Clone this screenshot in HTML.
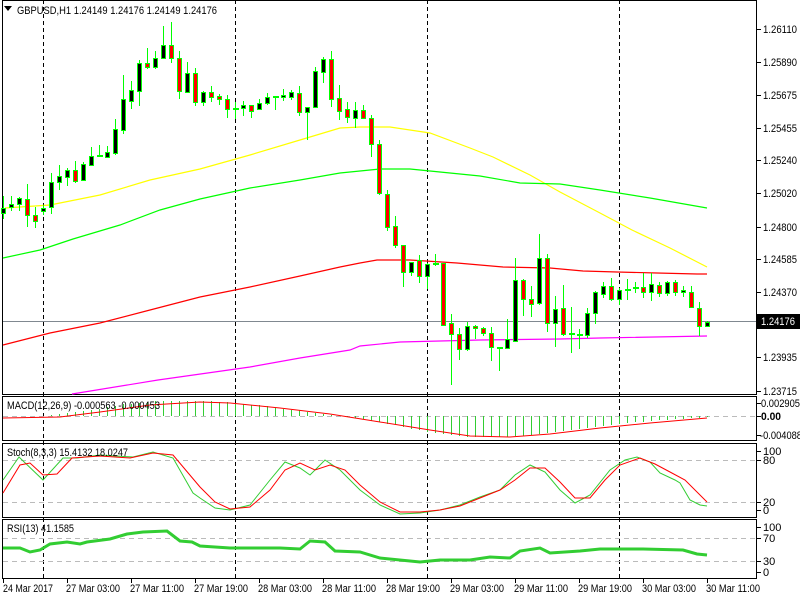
<!DOCTYPE html>
<html><head><meta charset="utf-8"><style>
html,body{margin:0;padding:0;background:#fff;}
svg{display:block;font-family:"Liberation Sans",Tahoma,sans-serif;font-size:11px;}
</style></head><body>
<svg width="800" height="600" viewBox="0 0 800 600" xmlns="http://www.w3.org/2000/svg">
<rect width="800" height="600" fill="#fff"/>
<g fill="none" stroke="#000" stroke-width="1">
<rect x="2.5" y="0.5" width="754" height="394"/>
<rect x="2.5" y="396.5" width="754" height="44"/>
<rect x="2.5" y="443.5" width="754" height="74"/>
<rect x="2.5" y="519.5" width="754" height="59"/>
</g>
<g stroke="#000" stroke-dasharray="4,3">
<path d="M43.5 0V578M235.5 0V578M427.5 0V578M619.5 0V578"/>
</g>
<g stroke="#bbb" stroke-dasharray="5,4">
<path d="M3 416.5H756M3 460.5H756M3 502.5H756M3 538.5H756M3 561.5H756"/>
</g>
<path d="M3 321.5H756" stroke="#808890"/>
<g fill="none" stroke-width="1.2">
<polyline stroke="#ffff00" points="5,208 50,205 100,195 150,180 200,169 250,155 300,140 340,128 360,127 390,127 430,133 470,148 493,157 530,175 560,192 600,213 632,230 670,248 707,267"/>
<polyline stroke="#00ff00" points="3,258 40,250 73,239 120,225 160,210 200,199 250,188 300,180 340,173 380,169 410,169 440,172 480,176 520,183 560,184 600,190 650,198 707,208"/>
<polyline stroke="#ff0000" points="3,345 50,333 100,323 150,310 200,297 250,287 300,276 340,267 360,263 377,260 410,260 457,263 503,267 550,268 583,271 617,272 657,273 697,274 707,274"/>
<polyline stroke="#ff00ff" points="72,394 158,380 250,367 300,358 350,350 360,346 400,342 480,340 560,339 600,338 707,336"/>
</g>
<path stroke="#00ff00" fill="none" d="M3.5 196V219M11.5 196V211M19.5 197V211M27.5 184V227M35.5 207V228M43.5 205V215M51.5 173V214M59.5 165V190M67.5 168V186M75.5 161V183M83.5 162V181M91.5 147V166M99.5 145V157M107.5 146V157M115.5 119V155M123.5 75V134M131.5 81V109M139.5 60V106M147.5 48V69M155.5 51V69M163.5 26V58M171.5 22V63M179.5 51V99M187.5 62V93M195.5 68V106M203.5 91V106M211.5 86V102M219.5 94V105M227.5 95V118M235.5 102V119M243.5 101V116M251.5 105V118M259.5 99V110M267.5 93V105M275.5 97V110M283.5 89V101M291.5 90V100M299.5 86V116M307.5 107V140M315.5 67V108M323.5 57V83M331.5 51V107M339.5 85V120M347.5 102V123M355.5 102V128M363.5 105V118M371.5 115V157M379.5 140V195M387.5 190V231M395.5 216V248M403.5 245V287M411.5 262V276M419.5 255V283M427.5 263V289M435.5 254V266M443.5 263V326M451.5 314V385M459.5 328V360M467.5 322V351M475.5 325V339M483.5 327V336M491.5 327V361M499.5 347V371M507.5 319V349M515.5 258V342M523.5 279V316M531.5 286V317M539.5 234V305M547.5 254V332M555.5 296V347M563.5 285V336M571.5 307V353M579.5 329V349M587.5 308V338M595.5 291V324M603.5 282V298M611.5 278V301M619.5 288V305M627.5 279V300M635.5 282V293M643.5 273V298M651.5 273V301M659.5 282V297M667.5 281V296M675.5 280V296M683.5 286V297M691.5 286V308M699.5 302V336M707.5 321V326"/>
<path stroke="#00ff00" stroke-width="2" d="M97 156h6M233 109h6M273 97h6M433 264h6M497 348h6M569 334h6M577 335h6M625 290h6M633 288h6"/>
<g fill="#000" stroke="#00ff00">
<rect x="1.5" y="208.5" width="4" height="5"/><rect x="9.5" y="204.5" width="4" height="3"/><rect x="17.5" y="198.5" width="4" height="6"/><rect x="41.5" y="208.5" width="4" height="3"/><rect x="49.5" y="182.5" width="4" height="25"/><rect x="57.5" y="176.5" width="4" height="6"/><rect x="65.5" y="170.5" width="4" height="7"/><rect x="81.5" y="164.5" width="4" height="16"/><rect x="89.5" y="156.5" width="4" height="9"/><rect x="105.5" y="152.5" width="4" height="5"/><rect x="113.5" y="129.5" width="4" height="24"/><rect x="121.5" y="99.5" width="4" height="31"/><rect x="129.5" y="90.5" width="4" height="11"/><rect x="137.5" y="63.5" width="4" height="28"/><rect x="153.5" y="58.5" width="4" height="9"/><rect x="161.5" y="45.5" width="4" height="13"/><rect x="185.5" y="73.5" width="4" height="19"/><rect x="201.5" y="92.5" width="4" height="10"/><rect x="241.5" y="105.5" width="4" height="3"/><rect x="257.5" y="103.5" width="4" height="6"/><rect x="265.5" y="97.5" width="4" height="6"/><rect x="281.5" y="95.5" width="4" height="2"/><rect x="289.5" y="92.5" width="4" height="5"/><rect x="305.5" y="107.5" width="4" height="5"/><rect x="313.5" y="71.5" width="4" height="36"/><rect x="321.5" y="59.5" width="4" height="13"/><rect x="353.5" y="110.5" width="4" height="8"/><rect x="409.5" y="262.5" width="4" height="10"/><rect x="425.5" y="264.5" width="4" height="12"/><rect x="465.5" y="326.5" width="4" height="23"/><rect x="505.5" y="339.5" width="4" height="9"/><rect x="513.5" y="280.5" width="4" height="61"/><rect x="537.5" y="258.5" width="4" height="45"/><rect x="553.5" y="309.5" width="4" height="14"/><rect x="585.5" y="313.5" width="4" height="22"/><rect x="593.5" y="292.5" width="4" height="21"/><rect x="601.5" y="286.5" width="4" height="8"/><rect x="617.5" y="290.5" width="4" height="9"/><rect x="649.5" y="284.5" width="4" height="8"/><rect x="665.5" y="282.5" width="4" height="11"/><rect x="681.5" y="290.5" width="4" height="2"/><rect x="705.5" y="322.5" width="4" height="4"/>
</g>
<g fill="#ff0000" stroke="#00ff00">
<rect x="25.5" y="199.5" width="4" height="16"/><rect x="33.5" y="215.5" width="4" height="6"/><rect x="73.5" y="170.5" width="4" height="11"/><rect x="145.5" y="63.5" width="4" height="4"/><rect x="169.5" y="45.5" width="4" height="13"/><rect x="177.5" y="58.5" width="4" height="33"/><rect x="193.5" y="73.5" width="4" height="29"/><rect x="209.5" y="92.5" width="4" height="5"/><rect x="217.5" y="96.5" width="4" height="3"/><rect x="225.5" y="99.5" width="4" height="10"/><rect x="249.5" y="105.5" width="4" height="6"/><rect x="297.5" y="93.5" width="4" height="19"/><rect x="329.5" y="59.5" width="4" height="40"/><rect x="337.5" y="98.5" width="4" height="13"/><rect x="345.5" y="109.5" width="4" height="8"/><rect x="361.5" y="110.5" width="4" height="8"/><rect x="369.5" y="118.5" width="4" height="26"/><rect x="377.5" y="144.5" width="4" height="49"/><rect x="385.5" y="194.5" width="4" height="33"/><rect x="393.5" y="226.5" width="4" height="19"/><rect x="401.5" y="245.5" width="4" height="27"/><rect x="417.5" y="260.5" width="4" height="16"/><rect x="441.5" y="263.5" width="4" height="62"/><rect x="449.5" y="323.5" width="4" height="11"/><rect x="457.5" y="334.5" width="4" height="15"/><rect x="473.5" y="326.5" width="4" height="2"/><rect x="481.5" y="328.5" width="4" height="5"/><rect x="489.5" y="333.5" width="4" height="14"/><rect x="521.5" y="280.5" width="4" height="19"/><rect x="529.5" y="299.5" width="4" height="5"/><rect x="545.5" y="258.5" width="4" height="65"/><rect x="561.5" y="308.5" width="4" height="26"/><rect x="609.5" y="286.5" width="4" height="13"/><rect x="641.5" y="287.5" width="4" height="5"/><rect x="657.5" y="285.5" width="4" height="8"/><rect x="673.5" y="282.5" width="4" height="10"/><rect x="689.5" y="292.5" width="4" height="15"/><rect x="697.5" y="308.5" width="4" height="18"/>
</g>
<path d="M4 6h8l-4 5z" fill="#000"/>
<text x="17" y="14" fill="#000" textLength="200" lengthAdjust="spacingAndGlyphs">GBPUSD,H1  1.24149 1.24176 1.24149 1.24176</text>
<g stroke="#000"><path d="M757 29.5h4M757 62.5h4M757 95.5h4M757 128.5h4M757 160.5h4M757 193.5h4M757 227.5h4M757 259.5h4M757 292.5h4M757 357.5h4M757 391.5h4M757 403.5h4M757 416.5h4M757 435.5h4M757 451.5h4M757 460.5h4M757 502.5h4M757 510.5h4M757 527.5h4M757 538.5h4M757 561.5h4M757 572.5h4"/></g>
<g fill="#000" font-size="11">
<text x="763" y="33" textLength="34" lengthAdjust="spacingAndGlyphs">1.26110</text><text x="763" y="66" textLength="34" lengthAdjust="spacingAndGlyphs">1.25890</text><text x="763" y="99" textLength="34" lengthAdjust="spacingAndGlyphs">1.25675</text><text x="763" y="132" textLength="34" lengthAdjust="spacingAndGlyphs">1.25455</text><text x="763" y="164" textLength="34" lengthAdjust="spacingAndGlyphs">1.25240</text><text x="763" y="197" textLength="34" lengthAdjust="spacingAndGlyphs">1.25020</text><text x="763" y="231" textLength="34" lengthAdjust="spacingAndGlyphs">1.24800</text><text x="763" y="263" textLength="34" lengthAdjust="spacingAndGlyphs">1.24585</text><text x="763" y="296" textLength="34" lengthAdjust="spacingAndGlyphs">1.24370</text><text x="763" y="361" textLength="34" lengthAdjust="spacingAndGlyphs">1.23935</text><text x="763" y="395" textLength="34" lengthAdjust="spacingAndGlyphs">1.23715</text>
<text x="761" y="407" textLength="39" lengthAdjust="spacingAndGlyphs">0.002905</text><text x="761" y="420" font-weight="bold" textLength="20" lengthAdjust="spacingAndGlyphs">0.00</text><text x="760" y="439" textLength="42" lengthAdjust="spacingAndGlyphs">-0.004088</text>
<text x="763" y="455">100</text><text x="763" y="464">80</text><text x="763" y="506">20</text><text x="763" y="514">0</text>
<text x="763" y="531">100</text><text x="763" y="542">70</text><text x="763" y="565">30</text><text x="763" y="576">0</text>
</g>
<rect x="757" y="314" width="43" height="15" fill="#000"/>
<text x="761" y="325" fill="#fff" textLength="34" lengthAdjust="spacingAndGlyphs">1.24176</text>
<path stroke="#32cd32" fill="none" d="M51.5 416V415M59.5 416V414M67.5 416V413M75.5 416V412M83.5 416V411M91.5 416V410M99.5 416V409M107.5 416V407M115.5 416V406M123.5 416V404M131.5 416V404M139.5 416V403M147.5 416V402M155.5 416V401M163.5 416V401M171.5 416V401M179.5 416V401M187.5 416V401M195.5 416V401M203.5 416V401M211.5 416V401M219.5 416V402M227.5 416V402M235.5 416V403M243.5 416V404M251.5 416V405M259.5 416V405M267.5 416V406M275.5 416V408M283.5 416V409M291.5 416V410M299.5 416V410M307.5 416V412M315.5 416V413M323.5 416V414M331.5 416V415M339.5 416V416M347.5 416V417M355.5 416V418M363.5 416V419M371.5 416V421M379.5 416V422M387.5 416V424M395.5 416V425M403.5 416V427M411.5 416V429M419.5 416V430M427.5 416V432M435.5 416V433M443.5 416V434M451.5 416V435M459.5 416V436M467.5 416V437M475.5 416V437M483.5 416V437M491.5 416V437M499.5 416V437M507.5 416V437M515.5 416V436M523.5 416V436M531.5 416V435M539.5 416V434M547.5 416V433M555.5 416V432M563.5 416V431M571.5 416V430M579.5 416V429M587.5 416V428M595.5 416V427M603.5 416V426M611.5 416V425M619.5 416V424M627.5 416V423M635.5 416V422M643.5 416V422M651.5 416V421M659.5 416V420M667.5 416V420M675.5 416V419M683.5 416V419M691.5 416V418M699.5 416V418M707.5 416V417"/>
<polyline fill="none" stroke="#ff0000" points="3,418 60,417 100,412 150,405 200,402 230,403 280,408 330,414 380,422 430,430 470,436 510,437 550,434 600,428 650,423 707,418"/>
<text x="7" y="409" fill="#000" textLength="153" lengthAdjust="spacingAndGlyphs">MACD(12,26,9) -0.000563 -0.000453</text>
<polyline fill="none" stroke="#32cd32" points="3,480 19,457 43,480 63,458 77,458 100,455 133,457 153,452 173,458 193,493 200,498 215,508 230,510 250,505 270,480 285,462 300,468 310,475 325,460 340,470 360,490 380,505 400,514 420,513 440,510 460,505 480,497 500,490 515,475 530,465 545,472 560,490 575,503 590,495 610,470 625,460 637,457 650,462 660,473 675,480 680,483 690,500 700,505 707,506"/>
<polyline fill="none" stroke="#ff0000" points="3,493 20,465 30,463 43,475 57,474 72,458 100,456 130,458 153,453 173,455 200,487 215,502 230,509 250,507 270,490 285,470 300,463 315,470 330,465 345,470 360,485 380,502 400,512 420,512 440,510 460,506 480,498 500,490 515,480 530,468 545,468 560,482 575,498 590,498 605,480 620,465 640,458 655,464 670,472 685,480 707,502"/>
<text x="7" y="456" fill="#000" textLength="121" lengthAdjust="spacingAndGlyphs">Stoch(8,3,3) 15.4132 18.0247</text>
<polyline fill="none" stroke="#32cd32" stroke-width="3" points="3,548 20,548 30,552 40,550 50,544 67,542 80,544 87,542 110,539 127,534 143,532 167,531 180,541 192,542 200,546 230,548 280,548 300,549 310,541 325,542 335,551 360,552 380,558 420,562 440,560 470,560 490,557 510,558 520,551 540,548 550,553 580,551 600,549 620,549 643,549 683,550 697,554 707,555"/>
<text x="7" y="532" fill="#000" textLength="67" lengthAdjust="spacingAndGlyphs">RSI(13) 41.1585</text>
<g stroke="#000"><path d="M3.5 579v4M67.5 579v4M131.5 579v4M195.5 579v4M259.5 579v4M323.5 579v4M387.5 579v4M451.5 579v4M515.5 579v4M579.5 579v4M643.5 579v4M707.5 579v4"/></g>
<g fill="#000" lengthAdjust="spacingAndGlyphs">
<text x="3" y="592" textLength="50" lengthAdjust="spacingAndGlyphs">24 Mar 2017</text><text x="66" y="592" textLength="54" lengthAdjust="spacingAndGlyphs">27 Mar 03:00</text><text x="130" y="592" textLength="54" lengthAdjust="spacingAndGlyphs">27 Mar 11:00</text><text x="194" y="592" textLength="54" lengthAdjust="spacingAndGlyphs">27 Mar 19:00</text><text x="258" y="592" textLength="54" lengthAdjust="spacingAndGlyphs">28 Mar 03:00</text><text x="322" y="592" textLength="54" lengthAdjust="spacingAndGlyphs">28 Mar 11:00</text><text x="386" y="592" textLength="54" lengthAdjust="spacingAndGlyphs">28 Mar 19:00</text><text x="450" y="592" textLength="54" lengthAdjust="spacingAndGlyphs">29 Mar 03:00</text><text x="514" y="592" textLength="54" lengthAdjust="spacingAndGlyphs">29 Mar 11:00</text><text x="578" y="592" textLength="54" lengthAdjust="spacingAndGlyphs">29 Mar 19:00</text><text x="642" y="592" textLength="54" lengthAdjust="spacingAndGlyphs">30 Mar 03:00</text><text x="706" y="592" textLength="54" lengthAdjust="spacingAndGlyphs">30 Mar 11:00</text>
</g>
</svg>
</body></html>
